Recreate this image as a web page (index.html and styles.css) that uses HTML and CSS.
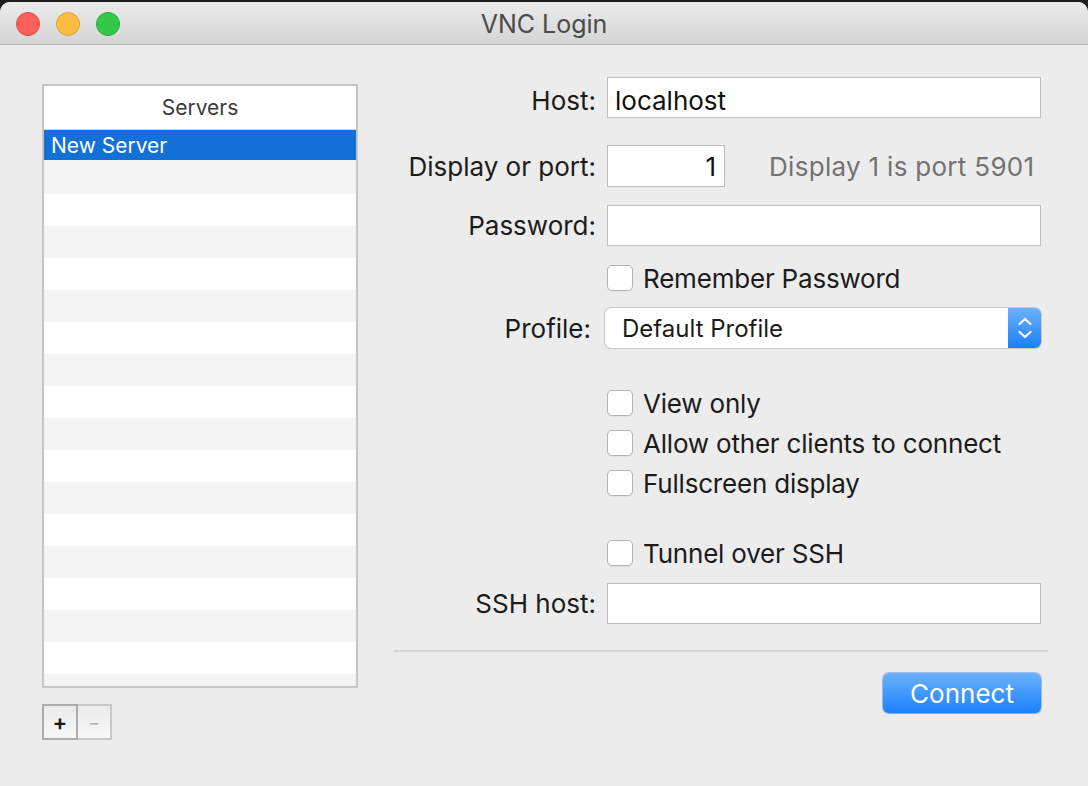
FILE: index.html
```html
<!DOCTYPE html>
<html>
<head>
<meta charset="utf-8">
<title>VNC Login</title>
<link rel="stylesheet" href="styles.css">
</head>
<body>
<div class="window">
  <div class="titlebar">
    <div class="lights">
      <span class="light red"></span>
      <span class="light yellow"></span>
      <span class="light green"></span>
    </div>
    <div class="title">VNC Login</div>
  </div>
  <div class="content">
    <div class="left">
      <div class="list">
        <div class="list-header">Servers</div>
        <div class="list-rows">
          <div class="list-row selected">New Server</div>
          <div class="list-row"></div>
          <div class="list-row"></div>
          <div class="list-row"></div>
          <div class="list-row"></div>
          <div class="list-row"></div>
          <div class="list-row"></div>
          <div class="list-row"></div>
          <div class="list-row"></div>
          <div class="list-row"></div>
          <div class="list-row"></div>
          <div class="list-row"></div>
          <div class="list-row"></div>
          <div class="list-row"></div>
          <div class="list-row"></div>
          <div class="list-row"></div>
          <div class="list-row"></div>
          <div class="list-row"></div>
        </div>
      </div>
      <div class="pm">
        <div class="pm-btn plus">+</div>
        <div class="pm-btn minus">−</div>
      </div>
    </div>
    <div class="right">
      <div class="frow r-host">
        <div class="label host-label">Host:</div>
        <div class="field wide host-field">localhost</div>
      </div>
      <div class="frow r-display">
        <div class="label">Display or port:</div>
        <div class="field port">1</div>
        <div class="hint">Display 1 is port 5901</div>
      </div>
      <div class="frow r-pass">
        <div class="label">Password:</div>
        <div class="field wide"></div>
      </div>
      <div class="frow r-remember check-row">
        <div class="label"></div>
        <span class="checkbox"></span><span class="ctext">Remember Password</span>
      </div>
      <div class="frow r-profile">
        <div class="label profile-label">Profile:</div>
        <div class="popup">
          <span class="popup-text">Default Profile</span>
          <span class="stepper">
            <svg width="18" height="26" viewBox="0 0 18 26"><path d="M3.5 9 L9 4 L14.5 9" fill="none" stroke="#fff" stroke-width="2.2" stroke-linecap="round" stroke-linejoin="round"/><path d="M3.5 17 L9 22 L14.5 17" fill="none" stroke="#fff" stroke-width="2.2" stroke-linecap="round" stroke-linejoin="round"/></svg>
          </span>
        </div>
      </div>
      <div class="frow r-view check-row">
        <div class="label"></div>
        <span class="checkbox"></span><span class="ctext">View only</span>
      </div>
      <div class="frow r-allow check-row">
        <div class="label"></div>
        <span class="checkbox"></span><span class="ctext">Allow other clients to connect</span>
      </div>
      <div class="frow r-full check-row">
        <div class="label"></div>
        <span class="checkbox"></span><span class="ctext">Fullscreen display</span>
      </div>
      <div class="frow r-tunnel check-row">
        <div class="label"></div>
        <span class="checkbox"></span><span class="ctext">Tunnel over SSH</span>
      </div>
      <div class="frow r-ssh">
        <div class="label">SSH host:</div>
        <div class="field wide"></div>
      </div>
      <div class="sep"></div>
      <div class="actions">
        <div class="connect">Connect</div>
      </div>
    </div>
  </div>
</div>
</body>
</html>
```

FILE: styles.css
```css
* { box-sizing: border-box; }
html, body {
  margin: 0;
  padding: 0;
  height: 100%;
  background: #1e1e21;
}
body {
  font-family: Inter, "Liberation Sans", sans-serif;
  font-size: 26px;
  color: #1b1b1b;
  padding-top: 2px;
}
.window {
  height: 784px;
  background: #ececec;
  border-radius: 10px 10px 0 0;
  overflow: hidden;
  display: flex;
  flex-direction: column;
}
.titlebar {
  height: 43px;
  flex: none;
  background: linear-gradient(#ebebeb, #d4d4d4);
  border-bottom: 1px solid #b4b4b4;
  position: relative;
  display: flex;
  align-items: center;
  justify-content: center;
}
.lights {
  position: absolute;
  left: 16px;
  top: 10px;
  display: flex;
  gap: 16px;
}
.light {
  width: 24px;
  height: 24px;
  border-radius: 50%;
  display: block;
}
.red { background: #fc605b; border: 1px solid #de4a45; }
.yellow { background: #fdbc40; border: 1px solid #dea236; }
.green { background: #34c84a; border: 1px solid #28a93b; }
.title {
  color: #4b4b4b;
  font-size: 25px;
  margin-top: 1px;
}
.content {
  flex: 1;
  display: flex;
  padding-left: 42px;
}
.left {
  width: 316px;
  padding-top: 39px;
  display: flex;
  flex-direction: column;
}
.list {
  height: 604px;
  border: 2px solid #c6c6c6;
  background: #fff;
  display: flex;
  flex-direction: column;
  overflow: hidden;
}
.list-header {
  height: 44px;
  flex: none;
  border-bottom: 1px solid #d0d0d0;
  display: flex;
  align-items: center;
  justify-content: center;
  font-size: 21px;
  color: #3a3a3a;
}
.list-rows {
  flex: 1;
  overflow: hidden;
}
.list-row {
  height: 32px;
  background: #fff;
}
.list-row:nth-child(even) { background: #f4f4f4; }
.list-row.selected {
  background: #1270d7;
  color: #fff;
  font-size: 21px;
  padding-left: 7px;
  display: flex;
  align-items: center;
  height: 30px;
  margin-bottom: 2px;
  box-shadow: 0 2px 0 #f4f4f4;
}
.pm {
  margin-top: 16px;
  display: flex;
}
.pm-btn {
  height: 36px;
  display: flex;
  align-items: center;
  justify-content: center;
  background: linear-gradient(#ebebeb, #f7f7f7);
  font-size: 22px;
}
.plus {
  width: 36px;
  border: 2px solid #acacac;
  color: #1a1a1a;
  font-weight: 600;
}
.minus {
  width: 34px;
  border: 2px solid #c9c9c9;
  border-left: none;
  color: #b0b0b0;
  font-size: 18px;
}
.right {
  width: 654px;
  margin-left: 36px;
  padding-top: 32px;
  display: flex;
  flex-direction: column;
}
.frow {
  display: flex;
  align-items: center;
}
.label {
  width: 213px;
  padding-right: 11px;
  text-align: right;
  flex: none;
}
.field {
  height: 41px;
  background: #fff;
  border: 1px solid #bdbdbd;
  display: flex;
  align-items: center;
  padding: 0 7px;
  color: #111;
}
.host-label { padding-top: 5px; }
.field.host-field { padding-top: 5px; }
.wide { width: 434px; }
.port {
  width: 118px;
  height: 42px;
  justify-content: flex-end;
  padding-right: 8px;
}
.hint {
  margin-left: 44px;
  color: #727272;
  letter-spacing: 0.3px;
}
.r-display { margin-top: 27px; }
.r-pass { margin-top: 18px; }
.r-remember { margin-top: 19px; }
.r-profile { margin-top: 17px; }
.r-view { margin-top: 42px; }
.r-allow { margin-top: 14px; }
.r-full { margin-top: 14px; }
.r-tunnel { margin-top: 44px; }
.r-ssh { margin-top: 17px; }
.check-row { height: 26px; }
.checkbox {
  width: 26px;
  height: 26px;
  background: #fff;
  border: 1px solid #b3b3b3;
  border-radius: 5px;
  box-shadow: 0 1px 0 rgba(0,0,0,0.04);
  flex: none;
}
.ctext {
  margin-left: 10px;
  letter-spacing: -0.2px;
}
.profile-label {
  width: 211px;
  padding-right: 14px;
}
.popup {
  width: 436px;
  height: 40px;
  background: #fff;
  border-radius: 6px;
  box-shadow: 0 0 0 1px #c9c9c9, 0 1px 1px rgba(0,0,0,0.18);
  display: flex;
  align-items: center;
  overflow: hidden;
}
.popup-text {
  flex: 1;
  padding-left: 17px;
  font-size: 24px;
}
.stepper {
  width: 33px;
  height: 40px;
  background: linear-gradient(#6cb3fa, #1a7ffb);
  display: flex;
  align-items: center;
  justify-content: center;
}
.sep {
  margin-top: 26px;
  height: 2px;
  background: #d5d5d5;
}
.actions {
  margin-top: 21px;
  display: flex;
  justify-content: flex-end;
  padding-right: 7px;
}
.connect {
  width: 158px;
  height: 40px;
  border-radius: 6px;
  background: linear-gradient(#6ab2fb, #1b80fb);
  box-shadow: 0 0 0 1px rgba(30,110,230,0.35), 0 1px 1px rgba(0,0,0,0.15);
  color: #fff;
  display: flex;
  align-items: center;
  justify-content: center;
}
```
